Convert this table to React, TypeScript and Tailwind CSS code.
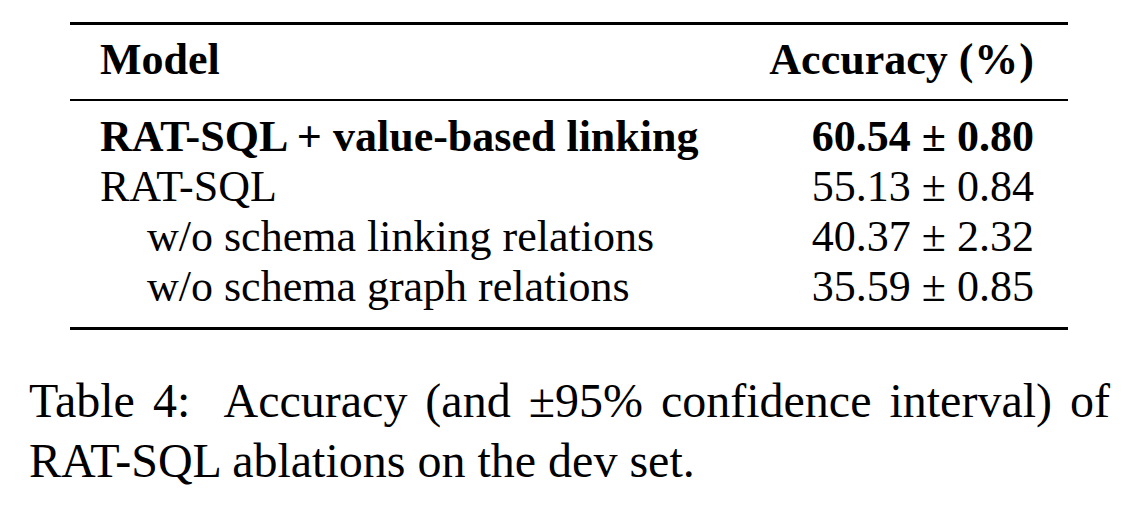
const rows = [
  { model: 'RAT-SQL + value-based linking', acc: '60.54 ± 0.80', bold: true, indent: false },
  { model: 'RAT-SQL', acc: '55.13 ± 0.84', bold: false, indent: false },
  { model: 'w/o schema linking relations', acc: '40.37 ± 2.32', bold: false, indent: true },
  { model: 'w/o schema graph relations', acc: '35.59 ± 0.85', bold: false, indent: true },
]

export default function App() {
  return (
    <div className="min-h-screen bg-white pt-[22px] text-black font-['Times_New_Roman','Liberation_Serif',Times,serif]">
      {/* table */}
      <div className="ml-[70px] w-[998px]">
        <div className="h-[3px] bg-black" />
        <div className="flex justify-between pl-[30px] pr-[34px] pt-[10px] text-[44px] leading-[50px] font-bold">
          <span>Model</span>
          <span>
            Accuracy (<span className="px-[1px]">%</span>)
          </span>
        </div>
        <div className="mt-[14px] h-[2px] bg-black" />
        <div className="pt-[11px] pb-[15px]">
          {rows.map((r) => (
            <div
              key={r.model}
              className={`flex justify-between pl-[30px] pr-[34px] text-[44px] leading-[50px] ${r.bold ? 'font-bold' : 'font-normal'}`}
            >
              <span className={r.indent ? 'pl-[47px]' : ''}>{r.model}</span>
              <span>{r.acc}</span>
            </div>
          ))}
        </div>
        <div className="h-[3px] bg-black" />
      </div>

      {/* caption */}
      <p className="mt-[41px] ml-[29px] w-[1081px] text-justify text-[48px] leading-[60px]">
        Table 4:&nbsp; Accuracy (and ±95% confidence interval) of RAT-SQL ablations on the dev set.
      </p>
    </div>
  )
}
